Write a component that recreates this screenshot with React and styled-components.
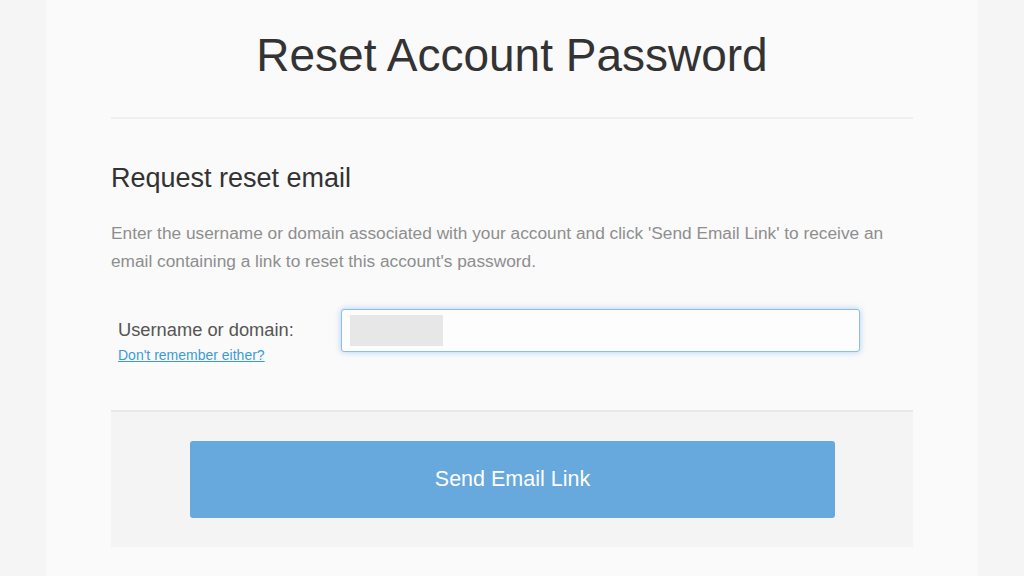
import React from "react";
import styled, { createGlobalStyle } from "styled-components";

const Global = createGlobalStyle`
  html, body { margin: 0; padding: 0; }
  body {
    background: #f5f5f5;
    font-family: "Liberation Sans", Arial, Helvetica, sans-serif;
  }
  * { box-sizing: border-box; }
`;

const Page = styled.div`
  min-height: 576px;
  display: flex;
  justify-content: center;
`;

const Column = styled.div`
  width: 932px;
  min-height: 576px;
  background: #fafafa;
  display: flex;
  flex-direction: column;
  align-items: center;
`;

const Card = styled.main`
  width: 802px;
  display: flex;
  flex-direction: column;
`;

const Header = styled.header`
  padding: 32px 0 39px;
  border-bottom: 2px solid #efefef;
  text-align: center;
`;

const Title = styled.h1`
  margin: 0;
  font-size: 46px;
  line-height: 46px;
  font-weight: 400;
  color: #333333;
`;

const Body = styled.section`
  padding: 43px 0 46px;
`;

const SubTitle = styled.h2`
  margin: 0;
  font-size: 27px;
  line-height: 32px;
  font-weight: 400;
  color: #333333;
`;

const Intro = styled.p`
  margin: 25px 0 0;
  font-size: 17.3px;
  line-height: 28px;
  color: #8e8e8e;
`;

const FieldRow = styled.div`
  margin-top: 34px;
  padding-left: 7px;
  display: flex;
  align-items: flex-start;
`;

const LabelCol = styled.div`
  width: 223px;
  padding-top: 10px;
  display: flex;
  flex-direction: column;
  gap: 6px;
`;

const Label = styled.label`
  font-size: 18.3px;
  line-height: 21px;
  color: #555555;
`;

const HelpLink = styled.a`
  font-size: 14px;
  line-height: 18px;
  color: #3a9ad9;
  text-decoration: underline;
  cursor: pointer;
`;

const InputBox = styled.div`
  width: 519px;
  height: 43px;
  display: flex;
  align-items: center;
  gap: 6px;
  padding: 0 8px;
  background: #fdfdfd;
  border: 1px solid #8fbde6;
  border-radius: 3px;
  box-shadow: 0 0 6px rgba(102, 175, 233, 0.55);
`;

const Redacted = styled.span`
  width: 93px;
  height: 31px;
  background: #e7e7e7;
  flex: none;
`;

const Input = styled.input`
  flex: 1;
  min-width: 0;
  height: 100%;
  border: none;
  outline: none;
  background: transparent;
  font: inherit;
  font-size: 16px;
`;

const Footer = styled.footer`
  background: #f4f4f4;
  border-top: 2px solid #e8e8e8;
  padding: 29px 78px 29px 79px;
`;

const Button = styled.button`
  width: 100%;
  height: 77px;
  border: none;
  border-radius: 3px;
  background: #67a8dd;
  color: #ffffff;
  font-family: "Liberation Sans", Arial, Helvetica, sans-serif;
  font-size: 21.5px;
  cursor: pointer;
`;

export default function App() {
  return (
    <>
      <Global />
      <Page>
        <Column>
          <Card>
            <Header>
              <Title>Reset Account Password</Title>
            </Header>
            <Body>
              <SubTitle>Request reset email</SubTitle>
              <Intro>
                Enter the username or domain associated with your account and click 'Send Email Link' to receive an email containing a link to reset this account's password.
              </Intro>
              <FieldRow>
                <LabelCol>
                  <Label htmlFor="user">Username or domain:</Label>
                  <HelpLink>Don't remember either?</HelpLink>
                </LabelCol>
                <InputBox>
                  <Redacted />
                  <Input id="user" type="text" />
                </InputBox>
              </FieldRow>
            </Body>
            <Footer>
              <Button>Send Email Link</Button>
            </Footer>
          </Card>
        </Column>
      </Page>
    </>
  );
}
